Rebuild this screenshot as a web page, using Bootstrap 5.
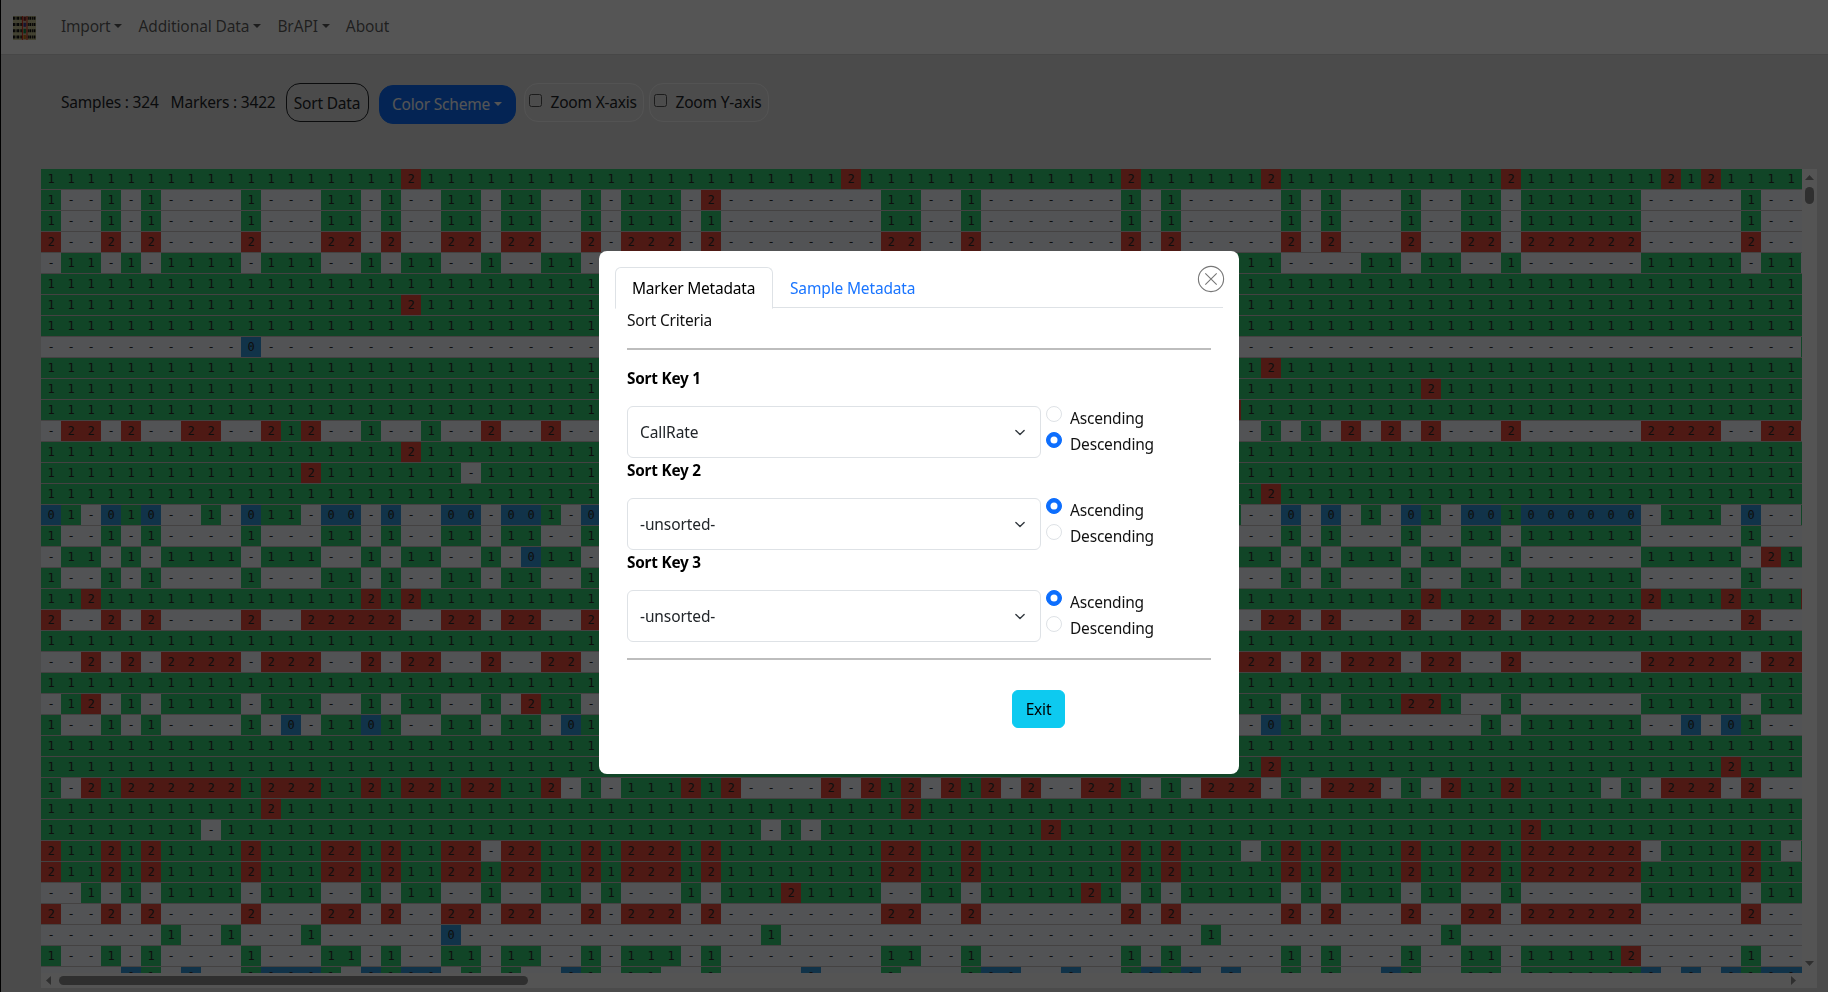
<!DOCTYPE html>
<html lang="en">
<head>
<meta charset="utf-8">
<title>Genotype Viewer</title>
<meta name="viewport" content="width=device-width, initial-scale=1">
<link href="https://cdn.jsdelivr.net/npm/bootstrap@5.3.0/dist/css/bootstrap.min.css" rel="stylesheet">
<style>
  body { font-family: "Noto Sans", sans-serif; font-size: 15.5px; line-height: 24px; letter-spacing: -.2px; color: #212529; overflow: hidden; background: #e1e1e1; }
  .page-frame { height: 992px; border-left: 1px solid #000; overflow: hidden; }
  .top-nav { height: 55px; background: #fff; border-bottom: 1px solid #d4d4d4; padding: 0 0 0 12px; }
  .top-nav .nav-link { color: rgba(0,0,0,.65); padding: 6px 8px 9px; }
  .top-nav .nav-wide { letter-spacing: -.1px; }
  .top-nav .brand-logo { margin: 2px 17px 0 0; }
  .tool-row { height: 114px; padding: 28px 0 0 60px; }
  .tool-row .stat { margin-top: 7px; white-space: nowrap; }
  .pill { font-size: 15.5px; line-height: 24px; letter-spacing: -.2px; height: 39px; border-radius: 14px; padding: 6px 0; white-space: nowrap; }
  .pill-sort { width: 83px; border: 1px solid #212529; color: #212529; margin-left: 10px; }
  .pill-color { width: 137px; margin: 2px 0 0 10px; padding-top: 5px; }
  .pill-zoom { width: 120px; border: 1px solid #fafafa; color: #212529; background: #e4e4e4; }
  .pill-zoom + .pill-zoom { margin-left: 5px; }
  .pill-zoom .form-check-input { width: 13px; height: 13px; border: 1px solid #555; border-radius: 2.5px; margin: 4px 9px 0 4px; background-color: transparent; }
  .viewer { display: grid; grid-template-columns: 1761px 15px; grid-template-rows: 804px 15px; margin-left: 40px; width: 1776px; background: #fdfdfd; }
  .matrix { overflow: hidden; background: #cdc5c7; font: 12px/20px "DejaVu Sans Mono", monospace; letter-spacing: 0; color: #2b2b2b; }
  .line { display: flex; height: 20px; margin-bottom: 1px; }
  .line span { flex: 0 0 20px; text-align: center; }
  .g0 { background: #3498db; } .g1 { background: #33cf77; } .g2 { background: #ea4c3c; } .gn { background: #f5faff; }
  .thumb { background: #8d8d8d; border-radius: 5px; }
  .thumb-y { width: 9px; height: 17px; margin-top: 7px; }
  .thumb-x { width: 469px; height: 9px; margin-left: 8px; }
  .modal-backdrop { --bs-backdrop-opacity: .667; }
  .sort-dialog { width: 640px; max-width: none; margin: 251px 0 0 599px; }
  .sort-dialog .modal-content { height: 523px; border: 0; padding: 16px; }
  .sort-dialog .nav-tabs { height: 41px; }
  .sort-dialog .nav-link { letter-spacing: -.15px; padding: 8px 16px; color: #1a75ff; white-space: nowrap; }
  .sort-dialog .nav-link.active { width: 158px; color: #000; letter-spacing: -.2px; }
  .close-ring { position: absolute; top: 14px; right: 14px; width: 28px; height: 28px; }
  .sort-body { padding: 0 12px; color: #111; }
  .sort-body hr { border-top: 2px solid #bdbdbd; opacity: 1; margin: 16px 0; }
  .key-name { font-weight: 700; color: #000; height: 24px; margin-bottom: 16px; font-size: 15.3px; }
  .key-line { height: 52px; }
  .key-line .form-select { width: 414px; height: 52px; font-size: 15.5px; letter-spacing: -.1px; line-height: 24px; padding: 13px 36px 13px 12px; background-position: right 13px center; background-size: 14px 11px; }
  .key-opts { margin-left: 5px; }
  .key-opts .form-check { display: flex; padding: 0; margin: 0; min-height: 0; height: 26px; }
  .key-opts .form-check-input { flex: 0 0 16px; width: 16px; height: 16px; margin: 0 8px 0 0; float: none; }
  .exit-btn { margin: 14px 0 0 385px; width: 53px; height: 38px; padding: 6px 0; font-size: 15.5px; line-height: 24px; letter-spacing: -.2px; color: #000; }
</style>
</head>
<body>
<div class="page-frame">
  <nav class="top-nav d-flex align-items-center">
    <svg class="brand-logo" width="23" height="24" viewBox="0 0 23 24">
      <rect width="23" height="24" fill="#c9c795"/>
      <path d="M0 2.3h23M0 8.4h23M0 14.8h23M0 21h23" stroke="#111" stroke-width="3" stroke-dasharray="1.9 .7 .9 .6"/>
      <rect x="9.7" y="0" width="4" height="24" fill="#d8b8a0"/>
      <path d="M9.4 0v24M14 0v24" stroke="#e02a1c" stroke-width="1"/>
      <path d="M11.7 .8v4" stroke="#7a2020" stroke-width="2.4"/><path d="M11.7 6.8v4" stroke="#3c3c90" stroke-width="2.4"/>
      <path d="M11.7 12.8v4.6" stroke="#158848" stroke-width="2.4"/><path d="M11.7 19v4" stroke="#c07a10" stroke-width="2.4"/>
    </svg>
    <div class="nav flex-row">
      <a class="nav-link dropdown-toggle" href="#">Import</a>
      <a class="nav-link nav-wide dropdown-toggle" href="#">Additional Data</a>
      <a class="nav-link nav-wide dropdown-toggle" href="#">BrAPI</a>
      <a class="nav-link nav-wide" href="#">About</a>
    </div>
  </nav>
  <div class="tool-row d-flex align-items-start">
    <div class="stat">Samples : 324</div>
    <div class="stat ms-2 ps-1">Markers : 3422</div>
    <button class="btn pill pill-sort">Sort Data</button>
    <button class="btn btn-primary dropdown-toggle pill pill-color">Color Scheme</button>
    <label class="btn pill pill-zoom d-flex ms-2"><input class="form-check-input" type="checkbox">Zoom X-axis</label>
    <label class="btn pill pill-zoom d-flex"><input class="form-check-input" type="checkbox">Zoom Y-axis</label>
  </div>
  <div class="viewer">
    <div class="matrix" id="matrix"></div>
    <div class="d-flex flex-column align-items-center">
      <svg width="9" height="5" style="margin-top:6px"><path d="M0 5h9L4.5 0z" fill="#8d8d8d"/></svg>
      <div class="thumb thumb-y"></div>
      <svg class="mt-auto" width="9" height="5" style="margin-bottom:7px"><path d="M0 0h9L4.5 5z" fill="#8d8d8d"/></svg>
    </div>
    <div class="d-flex align-items-center">
      <svg width="5" height="9" style="margin-left:5px"><path d="M5 0v9L0 4.5z" fill="#8d8d8d"/></svg>
      <div class="thumb thumb-x"></div>
      <svg class="ms-auto" width="5" height="9" style="margin-right:6px"><path d="M0 0v9l5-4.5z" fill="#8d8d8d"/></svg>
    </div>
    <div></div>
  </div>
</div>

<div class="modal-backdrop show"></div>
<div class="modal d-block" tabindex="-1">
  <div class="modal-dialog sort-dialog">
    <div class="modal-content">
      <svg class="close-ring" viewBox="0 0 28 28" fill="none" stroke="#777" stroke-width="1.1"><circle cx="14" cy="14" r="12.6"/><path d="M8.3 8.3l11.4 11.4M19.7 8.3L8.3 19.7"/></svg>
      <ul class="nav nav-tabs">
        <li class="nav-item"><a class="nav-link active" href="#">Marker Metadata</a></li>
        <li class="nav-item"><a class="nav-link" href="#">Sample Metadata</a></li>
      </ul>
      <div class="sort-body">
        <div>Sort Criteria</div>
        <hr>
        <div class="key-name">Sort Key 1</div>
        <div class="key-line d-flex">
          <select class="form-select"><option>CallRate</option></select>
          <div class="key-opts">
            <label class="form-check"><input class="form-check-input" type="radio" name="k1">Ascending</label>
            <label class="form-check"><input class="form-check-input" type="radio" name="k1" checked>Descending</label>
          </div>
        </div>
        <div class="key-name">Sort Key 2</div>
        <div class="key-line d-flex">
          <select class="form-select"><option>-unsorted-</option></select>
          <div class="key-opts">
            <label class="form-check"><input class="form-check-input" type="radio" name="k2" checked>Ascending</label>
            <label class="form-check"><input class="form-check-input" type="radio" name="k2">Descending</label>
          </div>
        </div>
        <div class="key-name">Sort Key 3</div>
        <div class="key-line d-flex">
          <select class="form-select"><option>-unsorted-</option></select>
          <div class="key-opts">
            <label class="form-check"><input class="form-check-input" type="radio" name="k3" checked>Ascending</label>
            <label class="form-check"><input class="form-check-input" type="radio" name="k3">Descending</label>
          </div>
        </div>
        <hr>
        <button class="btn btn-info exit-btn">Exit</button>
      </div>
    </div>
  </div>
</div>
<script src="https://cdn.jsdelivr.net/npm/bootstrap@5.3.0/dist/js/bootstrap.bundle.min.js"></script>
<script>
  // Haplotype shared by most markers: x = carrier, o = other (88 samples plus one cut off at the edge)
  const hap = 'xooxoxooooxoooxxoxooxxoxxoox' + 'oxxxoxooooooooxxooxoooooooxoxooo' + 'ooxoxoooxooxxoxxxxxxoooooxooo';
  const mix = (x, o) => hap.replace(/./g, c => c === 'x' ? x : o);
  const all = c => c.repeat(89);
  const set = (row, edits) => {
    const a = [...row];
    for (const [value, cols] of Object.entries(edits)) cols.forEach(c => a[c] = value);
    return a.join('');
  };
  const rows = [
    set(all('1'), {2: [18, 40, 54, 61, 73, 81, 83]}),
    set(mix('1', '-'), {2: [33]}),
    mix('1', '-'),
    mix('2', '-'),
    set(mix('-', '1'), {'-': [63, 65, 88]}),
    all('1'),
    set(all('1'), {2: [18]}),
    all('1'),
    set(all('-'), {0: [10], 1: [88]}),
    set(all('1'), {2: [61]}),
    set(all('1'), {2: [69]}),
    set(all('1'), {2: [59]}),
    '-22-2--22--212--1--1--2--2--' + '-'.repeat(32) + '-1-1-2-2-2---2------2222--22-',
    set(all('1'), {2: [18]}),
    set(all('1'), {2: [13], '-': [21]}),
    set(all('1'), {2: [61]}),
    '01-010--1-011-00-0--00-001-0' + '-'.repeat(31) + '1' + '--0-0-1-01-001000000-111-0--1',
    mix('1', '-'),
    set(mix('-', '1'), {0: [24], 2: [86]}),
    mix('1', '-'),
    set(all('1'), {2: [2, 16, 18, 69, 80, 84, 88]}),
    set(mix('2', '-'), {2: [13, 16, 61]}),
    all('1'),
    set(mix('-', '2'), {'-': [1]}),
    all('1'),
    set(mix('-', '1'), {2: [2, 24, 68, 69]}),
    set(mix('1', '-'), {0: [12, 16, 26, 61, 82, 84], '-': [68, 71]}),
    all('1'),
    set(all('1'), {2: [61, 84]}),
    '1-21222222122211212212211' + '2-1' + '-111212----2-212-212-2--221-1-22' + '2-1-222-1-21121111-1-222-2---',
    set(all('1'), {2: [11, 43]}),
    set(all('1'), {'-': [8, 36, 38], 2: [50, 74]}),
    set(mix('2', '1'), {'-': [22, 60, 80, 87]}),
    mix('2', '1'),
    set(mix('-', '1'), {'-': [1], 2: [37, 52]}),
    mix('2', '-'),
    set(all('-'), {1: [6, 9, 13, 36, 58, 70], 0: [20]}),
    set(mix('1', '-'), {2: [79]}),
    '----01-0--10001-0100-1-1--01' + '-11--1----0---1---100--0--1010-0' + '--1-1--01--11-1111110-0-01000'
  ];
  document.getElementById('matrix').innerHTML = rows.map(r =>
    '<div class="line">' + [...r].map((c, i) =>
      `<span class="g${c === '-' ? 'n' : c}">${i < 88 ? c : ''}</span>`).join('') + '</div>').join('');
</script>
</body>
</html>
